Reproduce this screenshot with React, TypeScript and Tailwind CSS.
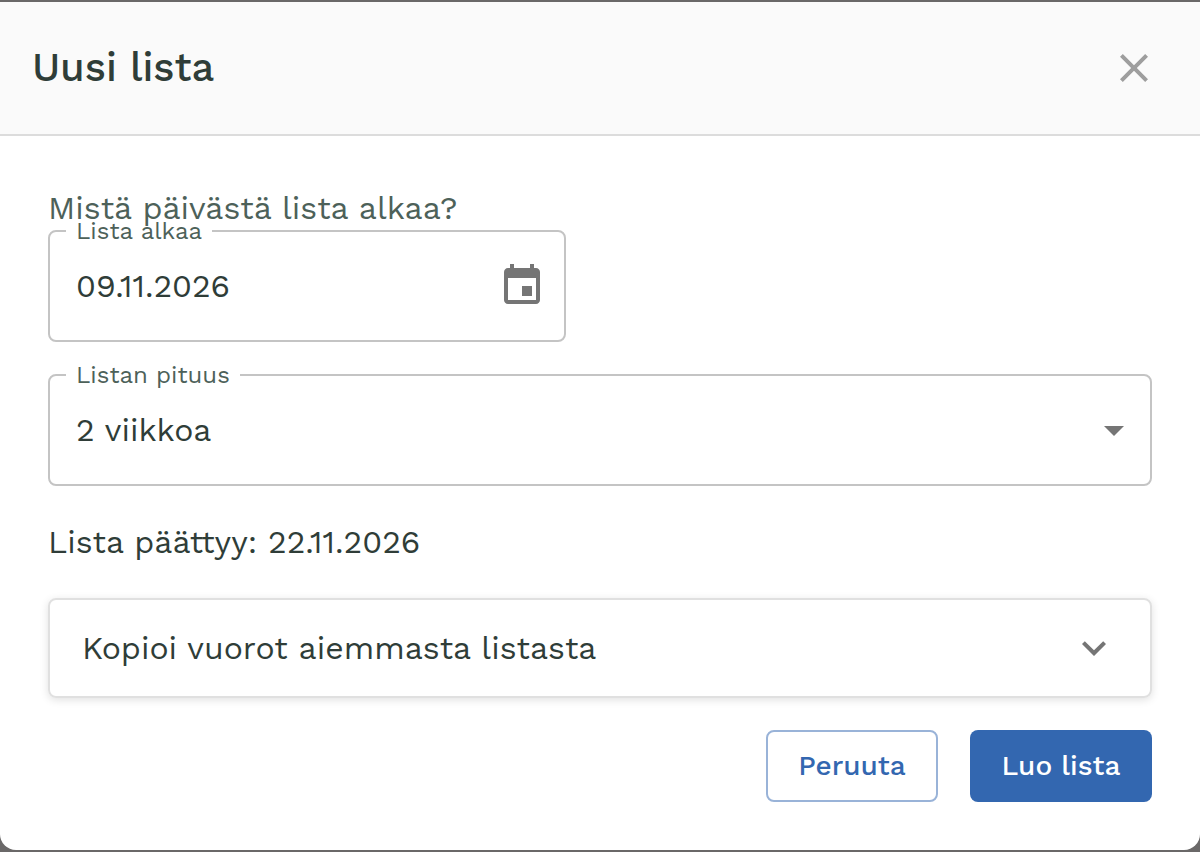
import { useState, type ReactNode } from "react";
import clsx from "clsx";

const LENGTH_OPTIONS = [
  { value: 1, label: "1 viikko", ends: "15.11.2026" },
  { value: 2, label: "2 viikkoa", ends: "22.11.2026" },
  { value: 3, label: "3 viikkoa", ends: "29.11.2026" }
];

const ICONS = {
  close:
    "M19 6.41L17.59 5 12 10.59 6.41 5 5 6.41 10.59 12 5 17.59 6.41 19 12 13.41 17.59 19 19 17.59 13.41 12z",
  event:
    "M17 12h-5v5h5v-5zM16 1v2H8V1H6v2H5c-1.11 0-1.99.9-1.99 2L3 19c0 1.1.89 2 2 2h14c1.1 0 2-.9 2-2V5c0-1.1-.9-2-2-2h-1V1h-2zm3 18H5V8h14v11z",
  dropDown: "M7 10l5 5 5-5z",
  expand: "M16.59 8.59L12 13.17 7.41 8.59 6 10l6 6 6-6z"
};

function Icon({ name, className }: { name: keyof typeof ICONS; className?: string }) {
  return (
    <svg viewBox="0 0 24 24" fill="currentColor" aria-hidden="true" className={clsx("size-12 shrink-0", className)}>
      <path d={ICONS[name]} />
    </svg>
  );
}

type FieldProps = { id: string; label: string; className?: string; children: ReactNode };

// The legend is only as tall as the border, so the label sits in the notch.
function Field({ id, label, className, children }: FieldProps) {
  return (
    <fieldset className={clsx("h-28 min-w-0 rounded-lg border-2 border-[#c4c4c4]", className)}>
      <legend className="ml-4 h-0.5 px-2.5 text-2xl leading-[2px] text-[#4d6159]">
        <label htmlFor={id}>{label}</label>
      </legend>
      {children}
    </fieldset>
  );
}

export default function App() {
  const [date, setDate] = useState("09.11.2026");
  const [weeks, setWeeks] = useState(2);
  const [open, setOpen] = useState(false);
  const ends = LENGTH_OPTIONS.find((option) => option.value === weeks)?.ends;

  return (
    <div className="flex min-h-screen flex-col bg-[#6a6868] py-0.5 font-['Work_Sans','Inter',sans-serif] text-[32px] leading-8 text-[#2f3d38]">
      <div
        role="dialog"
        aria-labelledby="dialog-title"
        className="flex-1 overflow-hidden rounded-b-2xl bg-white"
      >
        <header className="flex h-[134px] items-center justify-between border-b-2 border-[#dcdcdc] bg-[#fafafa] pr-[42px] pl-8">
          <h1 id="dialog-title" className="text-[40px] leading-12 font-medium">
            Uusi lista
          </h1>
          <button type="button" aria-label="Sulje" className="text-[#9e9e9e]">
            <Icon name="close" />
          </button>
        </header>

        <form className="px-12 pt-14 pb-12" onSubmit={(event) => event.preventDefault()}>
          <p className="text-[#4d6159]">Mistä päivästä lista alkaa?</p>

          <Field id="start" label="Lista alkaa" className="mt-1.5 w-[518px] max-w-full">
            <div className="flex h-full items-center pr-[18px] pl-[26px]">
              <input
                id="start"
                type="text"
                value={date}
                onChange={(event) => setDate(event.target.value)}
                className="min-w-0 flex-1 outline-none"
              />
              <button type="button" aria-label="Valitse päivä" className="text-[#757575]">
                <Icon name="event" />
              </button>
            </div>
          </Field>

          <Field id="length" label="Listan pituus" className="mt-8">
            <div className="relative h-full">
              <select
                id="length"
                value={weeks}
                onChange={(event) => setWeeks(Number(event.target.value))}
                className="h-full w-full appearance-none pr-16 pl-[26px] outline-none"
              >
                {LENGTH_OPTIONS.map((option) => (
                  <option key={option.value} value={option.value}>
                    {option.label}
                  </option>
                ))}
              </select>
              <div className="pointer-events-none absolute inset-y-0 right-3 flex items-center text-[#757575]">
                <Icon name="dropDown" />
              </div>
            </div>
          </Field>

          <p className="mt-10">Lista päättyy: {ends}</p>

          <button
            type="button"
            aria-expanded={open}
            onClick={() => setOpen((current) => !current)}
            className="mt-10 flex h-[100px] w-full items-center justify-between rounded-lg border-2 border-[#e0e0e0] px-8 text-left shadow-[0_2px_8px_rgba(0,0,0,0.12)]"
          >
            Kopioi vuorot aiemmasta listasta
            <Icon name="expand" className={clsx("text-[#757575]", open && "rotate-180")} />
          </button>

          <div className="mt-8 flex justify-end gap-8 text-[28px] font-medium">
            <button
              type="button"
              className="h-18 min-w-[172px] rounded-lg border-2 border-[#99b3d8] px-7 text-[#3367b0]"
            >
              Peruuta
            </button>
            <button type="submit" className="h-18 min-w-[182px] rounded-lg bg-[#3367b0] px-7 text-white">
              Luo lista
            </button>
          </div>
        </form>
      </div>
    </div>
  );
}
